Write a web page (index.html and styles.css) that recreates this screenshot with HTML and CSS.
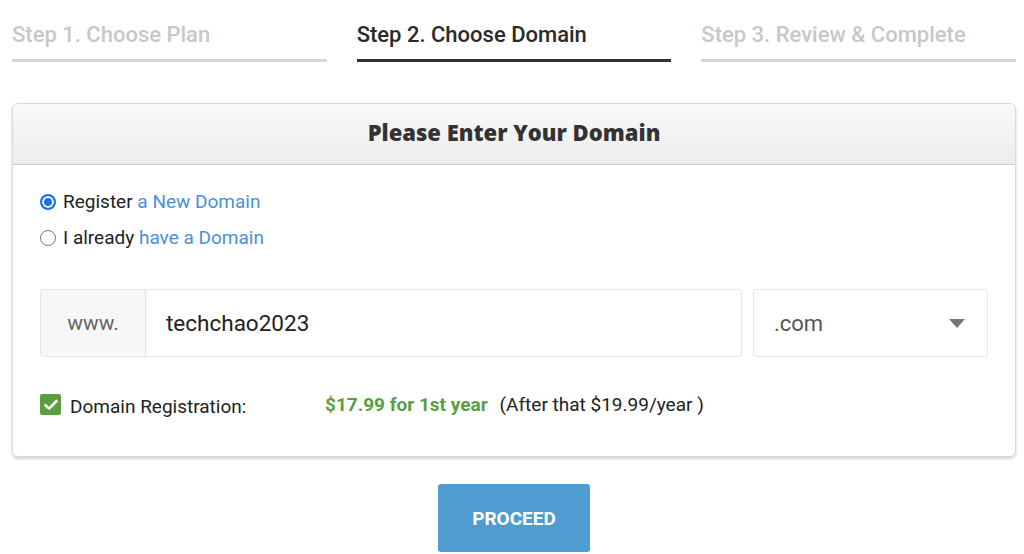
FILE: index.html
```html
<!DOCTYPE html>
<html>
<head>
<meta charset="utf-8">
<link rel="stylesheet" href="styles.css">
</head>
<body>
<div class="page">
  <div class="steps">
    <div class="step">Step 1. Choose Plan</div>
    <div class="step active">Step 2. Choose Domain</div>
    <div class="step">Step 3. Review &amp; Complete</div>
  </div>

  <div class="card">
    <div class="card-head">Please Enter Your Domain</div>
    <div class="card-body">
      <div class="options">
        <label class="opt"><span class="radio checked"></span>Register&nbsp;<span class="link">a New Domain</span></label>
        <label class="opt"><span class="radio"></span>I already&nbsp;<span class="link">have a Domain</span></label>
      </div>
      <div class="domain-row">
        <div class="input-group">
          <div class="addon">www.</div>
          <div class="field">techchao2023</div>
        </div>
        <div class="select">
          <span>.com</span>
          <svg class="caret" width="16" height="9" viewBox="0 0 16 9"><path d="M0 0 H16 L8 9 Z" fill="#777"/></svg>
        </div>
      </div>
      <div class="reg-row">
        <div class="reg-label">
          <span class="checkbox"><svg width="14" height="12" viewBox="0 0 14 12"><path d="M1.5 6.2 L5.2 9.6 L12.5 2" fill="none" stroke="#fff" stroke-width="2.6" stroke-linecap="round" stroke-linejoin="round"/></svg></span>
          <span class="reg-text">Domain Registration:</span>
        </div>
        <span class="price">$17.99 for 1st year</span>
        <span class="after">(After that $19.99/year )</span>
      </div>
    </div>
  </div>

  <div class="actions">
    <button class="btn">PROCEED</button>
  </div>
</div>
</body>
</html>
```

FILE: styles.css
```css
* { box-sizing: border-box; }
html, body { margin: 0; padding: 0; background: #fff; }
body { font-family: Roboto, "Liberation Sans", sans-serif; color: #222; }

.page { width: 1004px; margin-left: 12px; }

.steps { display: grid; grid-template-columns: 1fr 1fr 1fr; column-gap: 30px; }
.step {
  font-size: 22px; font-weight: 500; color: #c8c8c8;
  line-height: 26px; padding-top: 22px; padding-bottom: 11px;
  border-bottom: 3px solid #d6d6d6;
}
.step.active { color: #2a2a2a; border-bottom-color: #333; }

.card {
  margin-top: 41px;
  border: 1px solid #d9d9d9; border-radius: 6px;
  box-shadow: 0 2px 3px rgba(0,0,0,0.18);
  overflow: hidden;
}
.card-head {
  height: 61px;
  background: linear-gradient(#fafafa, #ececec);
  border-bottom: 1px solid #c9c9c9;
  text-align: center;
  font-family: "Open Sans", "DejaVu Sans", sans-serif;
  font-weight: 800; font-size: 22px; color: #333;
  line-height: 56px;
}
.card-body { padding: 24px 27px 40px 27px; }

.options { display: flex; flex-direction: column; gap: 10px; }
.opt { display: flex; align-items: center; font-size: 19px; line-height: 26px; color: #222; }
.link { color: #4a90d9; }
.radio {
  width: 16px; height: 16px; border-radius: 50%;
  border: 1.5px solid #777; margin-right: 7px; background: #fff;
}
.radio.checked { border: 2px solid #1a73e8; box-shadow: inset 0 0 0 2px #fff; background: #1a73e8; }

.domain-row { display: flex; gap: 11px; margin-top: 38px; }
.input-group {
  flex: 0 0 702px; height: 68px; display: flex;
  border: 1px solid #e6e6e6; border-radius: 3px; overflow: hidden;
}
.addon {
  width: 105px; background: #f7f7f7; border-right: 1px solid #e3e3e3;
  display: flex; align-items: center; justify-content: center;
  font-size: 21px; color: #666;
}
.field { flex: 1; display: flex; align-items: center; padding-left: 20px; font-size: 22.5px; color: #222; }
.select {
  flex: 1; height: 68px; border: 1px solid #e6e6e6; border-radius: 3px;
  display: flex; align-items: center; justify-content: space-between;
  padding: 0 22px 0 20px; font-size: 22px; color: #555;
}

.reg-row { display: flex; align-items: center; margin-top: 36px; font-size: 19px; }
.reg-label { width: 285px; display: flex; align-items: center; color: #222; }
.reg-text { position: relative; top: 2px; }
.checkbox {
  width: 21px; height: 21px; background: #5a9e3f; border-radius: 2px;
  display: inline-flex; align-items: center; justify-content: center; margin-right: 9px;
}
.price { color: #5a9e3f; font-weight: 700; }
.after { margin-left: 12px; color: #222; }

.actions { display: flex; justify-content: center; margin-top: 27px; }
.btn {
  width: 152px; height: 68px; border: 0; border-radius: 3px;
  background: #4f9cd0; color: #fff;
  font-family: Roboto, "Liberation Sans", sans-serif; font-weight: 700; font-size: 19px;
}
```
